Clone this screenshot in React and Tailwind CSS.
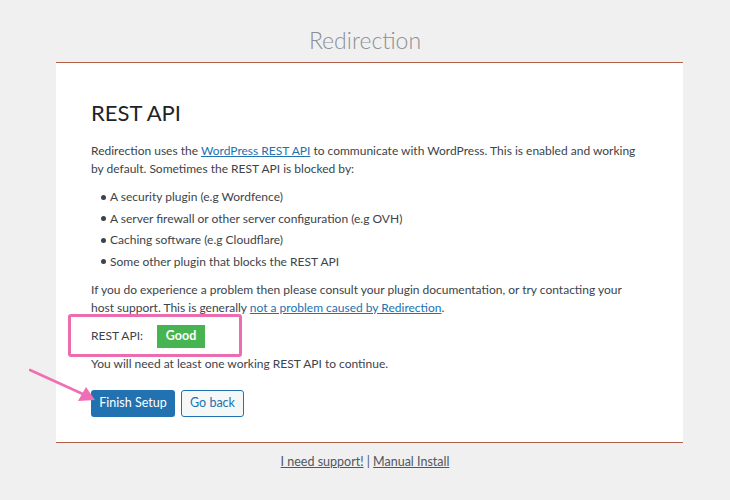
export default function App() {
  const font = { fontFamily: 'Lato, "Open Sans", sans-serif' };
  return (
    <div className="min-h-[500px] w-[730px] bg-[#f0f0f1] text-[#3c434a]" style={font}>
      <h1 className="pt-[26px] text-center text-[23px] font-light leading-[28px] text-[#8c8f94]">Redirection</h1>

      <div className="mx-[56px] mt-[8px] w-[627px] border-y border-[#b25f4a] bg-white pl-[35px] pr-[10px] pt-[36px] pb-[25px]">
        <h2 className="text-[22px] leading-[28px] text-[#1d2327]">REST API</h2>

        <p className="mt-[15px] text-[12px] leading-[18px]">
          Redirection uses the{" "}
          <a href="#" className="text-[#2271b1] underline">WordPress REST API</a>{" "}
          to communicate with WordPress. This is enabled and working
          <br />
          by default. Sometimes the REST API is blocked by:
        </p>

        <ul className="mt-[10px] ml-[10px] flex flex-col gap-[3.5px] text-[12px] leading-[18px]">
          {[
            "A security plugin (e.g Wordfence)",
            "A server firewall or other server configuration (e.g OVH)",
            "Caching software (e.g Cloudflare)",
            "Some other plugin that blocks the REST API",
          ].map((t) => (
            <li key={t} className="flex items-center gap-[4px]">
              <span className="h-[5px] w-[5px] rounded-full bg-[#3c434a]" />
              {t}
            </li>
          ))}
        </ul>

        <p className="mt-[10px] text-[12px] leading-[18px]">
          If you do experience a problem then please consult your plugin documentation, or try contacting your
          <br />
          host support. This is generally{" "}
          <a href="#" className="text-[#2271b1] underline">not a problem caused by Redirection</a>.
        </p>

        <div className="relative mt-[4px] flex h-[31px] items-center gap-[14px] text-[12px]">
          <div className="pointer-events-none absolute left-[-23px] top-[-7px] h-[43px] w-[174px] rounded-[3px] border-[3px] border-[#ec6cb0]" />
          <span>REST API:</span>
          <span className="flex h-[23px] w-[48px] items-center justify-center bg-[#46b450] text-[12.5px] font-bold text-white">Good</span>
        </div>

        <p className="mt-[3px] text-[12px] leading-[18px]">You will need at least one working REST API to continue.</p>

        <div className="relative mt-[17px] flex gap-[6px]">
          <svg className="pointer-events-none absolute left-[-62px] top-[-23px]" width="70" height="40" viewBox="0 0 70 40">
            <line x1="1" y1="3" x2="56" y2="28" stroke="#f06eb4" strokeWidth="2.5" strokeLinecap="round" />
            <polygon points="66,33 49,34 57,20" fill="#f06eb4" />
          </svg>
          <button className="h-[27px] w-[84px] rounded-[3px] bg-[#2271b1] text-[12.5px] text-white">Finish Setup</button>
          <button className="h-[27px] w-[63px] rounded-[3px] border border-[#2271b1] bg-[#f6f7f7] text-[12.5px] text-[#2271b1]">Go back</button>
        </div>
      </div>

      <div className="mt-[10px] text-center text-[12.5px] text-[#50575e]">
        <a href="#" className="underline">I need support!</a> | <a href="#" className="underline">Manual Install</a>
      </div>
    </div>
  );
}
